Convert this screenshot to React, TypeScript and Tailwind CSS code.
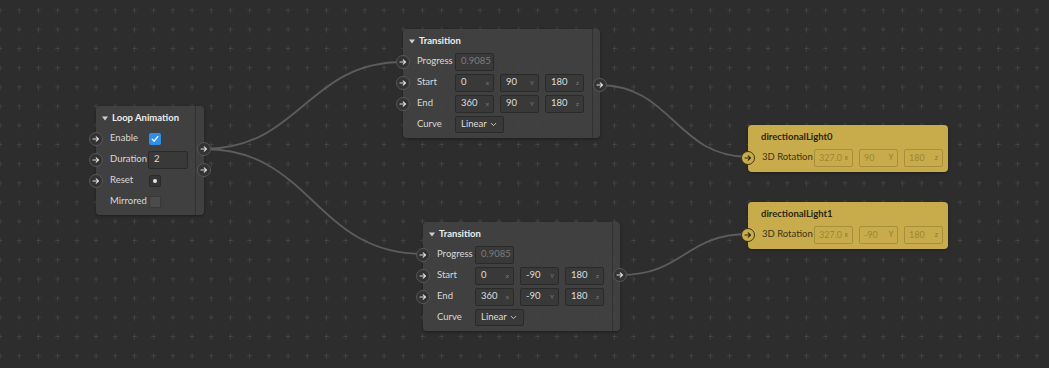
import React from "react"
import { ChevronDown } from "lucide-react"

/**
 * Node graph canvas: a Loop Animation node driving two Transition nodes,
 * which in turn feed the 3D Rotation of two directional lights.
 */

const FONT = "font-['Lato','Noto_Sans',sans-serif]"

function Arrow({ dark = false }: { dark?: boolean }) {
  return (
    <svg width="8" height="8" viewBox="0 0 8 8" fill="none">
      <path
        d="M1 4h5.5M4.2 1.8 6.5 4 4.2 6.2"
        stroke={dark ? "#2b2612" : "#dcdcdc"}
        strokeWidth="1.1"
        strokeLinecap="round"
        strokeLinejoin="round"
      />
    </svg>
  )
}

function Port({ dark = false, hidden = false }: { dark?: boolean; hidden?: boolean }) {
  if (hidden) return <span className="-ml-[7px] h-[14px] w-[14px] shrink-0" />
  return (
    <span
      className={
        dark
          ? "-ml-[7px] flex h-[14px] w-[14px] shrink-0 items-center justify-center rounded-full border border-[#3a3316] bg-[#c8ac4b]"
          : "-ml-[7px] flex h-[14px] w-[14px] shrink-0 items-center justify-center rounded-full border border-[#575757] bg-[#333333]"
      }
    >
      <Arrow dark={dark} />
    </span>
  )
}

function Field({ value, axis, muted = false }: { value: string; axis?: string; muted?: boolean }) {
  return (
    <div className="flex h-[18px] w-[39px] shrink-0 items-center justify-between rounded-[2px] border border-[#2a2a2a] bg-[#393939] pl-[5px] pr-[4px]">
      <span className={muted ? "text-[9.5px] text-[#7c7c7c]" : "text-[9.5px] text-[#dedede]"}>{value}</span>
      {axis && <span className="text-[6.5px] text-[#7a7a7a]">{axis}</span>}
    </div>
  )
}

function YellowField({ value, axis }: { value: string; axis: string }) {
  return (
    <div className="flex h-[18px] w-[39px] shrink-0 items-center justify-between rounded-[2px] border border-[#a88f3b] bg-[#c8ac4b] pl-[4px] pr-[4px]">
      <span className="text-[9px] text-[#9d8537]">{value}</span>
      <span className="text-[7px] text-[#8a7430]">{axis}</span>
    </div>
  )
}

function Row({ label, port = true, children }: { label: string; port?: boolean; children?: React.ReactNode }) {
  return (
    <div className="flex h-[21px] items-center">
      <Port hidden={!port} />
      <span className="ml-[7px] w-[38px] shrink-0 text-[9.5px] text-[#d8d8d8]">{label}</span>
      <div className="flex items-center gap-[6px]">{children}</div>
    </div>
  )
}

function Title({ text }: { text: string }) {
  return (
    <div className="flex h-[22px] items-center gap-[4px] pl-[6px] pt-[2px]">
      <svg width="6" height="5" viewBox="0 0 6 5">
        <path d="M0 0.5h6L3 4.5z" fill="#cfcfcf" />
      </svg>
      <span className="text-[9.5px] font-bold text-[#ececec]">{text}</span>
    </div>
  )
}

function OutPort({ top }: { top: string }) {
  return (
    <span
      className={`absolute -right-[7px] ${top} flex h-[14px] w-[14px] items-center justify-center rounded-full border border-[#575757] bg-[#333333]`}
    >
      <Arrow />
    </span>
  )
}

function TransitionNode({ pos, y, outTop }: { pos: string; y: string; outTop: string }) {
  return (
    <div className={`absolute ${pos} flex w-[197px] rounded-[4px] bg-[#434343]/90 shadow-[0_1px_3px_rgba(0,0,0,0.35)]`}>
      <div className="w-[189px] pb-[3px]">
        <Title text="Transition" />
        <Row label="Progress">
          <Field value="0.9085" muted />
        </Row>
        <Row label="Start">
          <Field value="0" axis="x" />
          <Field value={y} axis="Y" />
          <Field value="180" axis="z" />
        </Row>
        <Row label="End">
          <Field value="360" axis="x" />
          <Field value={y} axis="Y" />
          <Field value="180" axis="z" />
        </Row>
        <Row label="Curve" port={false}>
          <div className="flex h-[17px] w-[49px] items-center justify-between rounded-[2px] border border-[#2a2a2a] bg-[#393939] pl-[5px] pr-[5px]">
            <span className="text-[9.5px] text-[#dedede]">Linear</span>
            <ChevronDown size={9} strokeWidth={2.5} className="text-[#cfcfcf]" />
          </div>
        </Row>
      </div>
      <div className="flex-1 rounded-r-[4px] border-l border-[#323232]" />
      <OutPort top={outTop} />
    </div>
  )
}

function LightNode({ pos, title, y }: { pos: string; title: string; y: string }) {
  return (
    <div className={`absolute ${pos} w-[200px] rounded-[4px] bg-[#c8ac4b] pb-[4px] shadow-[0_1px_3px_rgba(0,0,0,0.35)]`}>
      <div className="flex h-[22px] items-center pl-[13px] pt-[2px]">
        <span className="text-[9.5px] font-bold text-[#2b2612]">{title}</span>
      </div>
      <div className="flex h-[21px] items-center">
        <Port dark />
        <span className="ml-[7px] w-[52px] shrink-0 text-[9.5px] text-[#3a3316]">3D Rotation</span>
        <div className="flex items-center gap-[6px]">
          <YellowField value="327.0" axis="x" />
          <YellowField value={y} axis="Y" />
          <YellowField value="180" axis="z" />
        </div>
      </div>
    </div>
  )
}

function Grid() {
  return (
    <svg className="absolute inset-0" width="1049" height="368">
      <defs>
        <pattern id="cross" x="-10" y="0" width="19.2" height="19.2" patternUnits="userSpaceOnUse">
          <path d="M7.5 10.5h5M10 8v5" stroke="#424242" strokeWidth="1" shapeRendering="crispEdges" />
        </pattern>
      </defs>
      <rect width="1049" height="368" fill="url(#cross)" />
    </svg>
  )
}

function Wires() {
  return (
    <svg className="absolute inset-0" width="1049" height="368" fill="none">
      <g stroke="#5c5c5c" strokeWidth="1.8">
        <path d="M204 149 C 300 149, 307 62, 403 62" />
        <path d="M204 149 C 312 149, 315 254, 423 254" />
        <path d="M599 85 C 672 85, 676 157, 749 157" />
        <path d="M620 275 C 684 275, 685 234, 749 234" />
      </g>
    </svg>
  )
}

export default function App() {
  return (
    <div className={`relative h-[368px] w-[1049px] overflow-hidden bg-[#2d2d2d] ${FONT}`}>
      <Grid />
      <Wires />

      {/* Loop Animation */}
      <div className="absolute left-[96px] top-[106px] flex w-[108px] rounded-[4px] bg-[#434343]/90 shadow-[0_1px_3px_rgba(0,0,0,0.35)]">
        <div className="w-[99px] pb-[3px]">
          <Title text="Loop Animation" />
          <Row label="Enable">
            <span className="ml-[1px] flex h-[12px] w-[12px] items-center justify-center rounded-[2px] bg-[#2f8fe8]">
              <svg width="8" height="8" viewBox="0 0 8 8" fill="none">
                <path d="M1.3 4.3 3.2 6.2 6.8 1.6" stroke="#ffffff" strokeWidth="1.3" strokeLinecap="round" strokeLinejoin="round" />
              </svg>
            </span>
          </Row>
          <Row label="Duration">
            <div className="flex h-[18px] w-[40px] items-center rounded-[2px] border border-[#2a2a2a] bg-[#393939] pl-[5px]">
              <span className="text-[9.5px] text-[#dedede]">2</span>
            </div>
          </Row>
          <Row label="Reset">
            <span className="ml-[1px] flex h-[12px] w-[12px] items-center justify-center rounded-[2px] border border-[#2a2a2a] bg-[#353535]">
              <span className="h-[4px] w-[4px] rounded-full bg-[#e8e8e8]" />
            </span>
          </Row>
          <Row label="Mirrored" port={false}>
            <span className="ml-[1px] h-[12px] w-[12px] rounded-[2px] border border-[#383838] bg-[#4b4b4b]" />
          </Row>
        </div>
        <div className="flex-1 rounded-r-[4px] border-l border-[#323232]" />
        <OutPort top="top-[36px]" />
        <OutPort top="top-[57px]" />
      </div>

      <TransitionNode pos="left-[403px] top-[29px]" y="90" outTop="top-[49px]" />
      <TransitionNode pos="left-[423px] top-[222px]" y="-90" outTop="top-[46px]" />

      <LightNode pos="left-[748px] top-[125px]" title="directionalLight0" y="90" />
      <LightNode pos="left-[748px] top-[202px]" title="directionalLight1" y="-90" />
    </div>
  )
}
